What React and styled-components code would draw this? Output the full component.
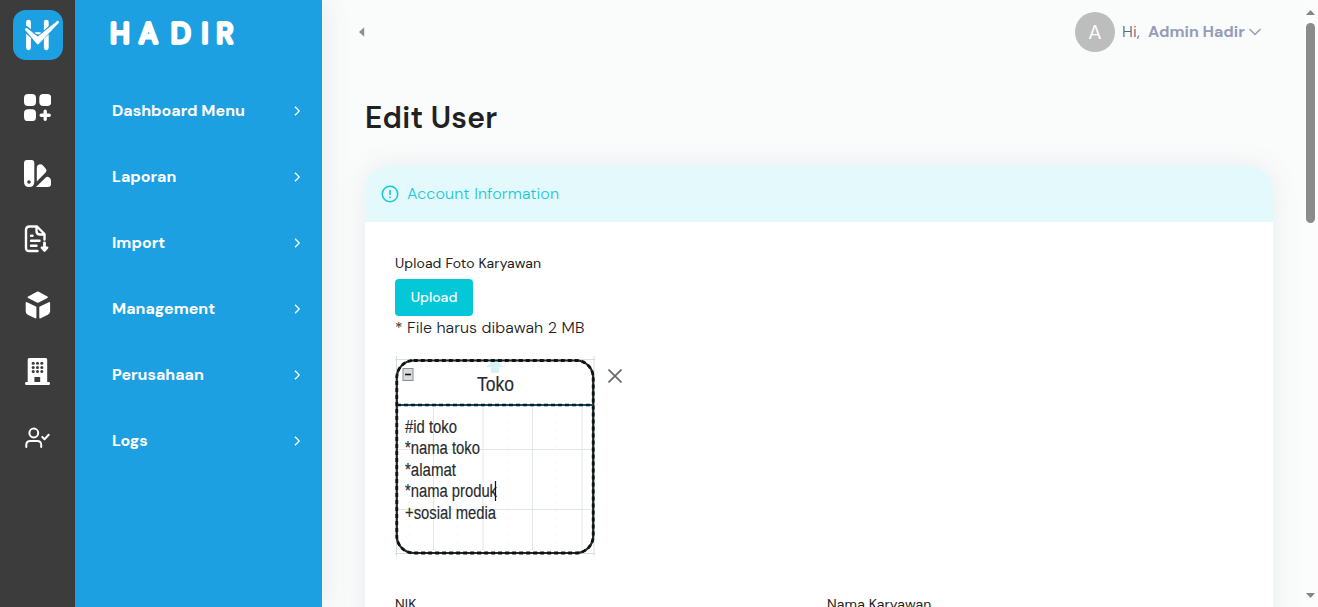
import React from "react";
import styled, { createGlobalStyle } from "styled-components";

const GlobalStyle = createGlobalStyle`
  * { box-sizing: border-box; }
  html, body { margin: 0; height: 100%; overflow: hidden; }
  body { font-family: "DM Sans", Inter, "Liberation Sans", sans-serif; color: #212121; }
  svg { display: block; flex: none; }
`;

const Page = styled.div`
  display: flex;
  width: 100%;
  height: 607px;
  overflow: hidden;
  background: #fafcfc;
`;
const Rail = styled.aside`
  width: 75px;
  flex: none;
  background: #3c3c3c;
  padding-top: 10px;
  display: flex;
  flex-direction: column;
  align-items: center;
  z-index: 2;
`;
const RailItems = styled.div`
  padding-top: 14px;
  display: flex;
  flex-direction: column;
`;
const RailItem = styled.div`
  height: 66px;
  display: flex;
  align-items: center;
  justify-content: center;
`;
const Sidebar = styled.nav`
  width: 247px;
  flex: none;
  background: #1da0e2;
  box-shadow: 0 0 28px rgba(82, 85, 92, 0.12);
  z-index: 1;
`;
const Brand = styled.div`
  height: 78px;
  padding: 15px 0 0 30px;
`;
const NavRow = styled.div`
  height: 66px;
  padding: 0 20px 0 37px;
  display: flex;
  align-items: center;
  justify-content: space-between;
  color: #fff;
  font-size: 16px;
  font-weight: 700;
  line-height: 24px;
`;
const Main = styled.main`
  flex: 1;
  min-width: 0;
  padding: 0 30px 0 43px;
`;
const TopBar = styled.header`
  height: 64px;
  display: flex;
  align-items: center;
  justify-content: space-between;
  margin-left: -7px;
`;
const Account = styled.div`
  display: flex;
  align-items: center;
  margin-right: 12px;
`;
const Avatar = styled.div`
  width: 40px;
  height: 40px;
  border-radius: 50%;
  background: #bdbdbd;
  color: #fff;
  font-size: 20px;
  display: flex;
  align-items: center;
  justify-content: center;
  margin-right: 7px;
`;
const Greeting = styled.span`
  font-size: 16px;
  line-height: 22px;
  font-weight: 300;
  color: #596680;
  width: 26px;
  letter-spacing: 0.2px;
`;
const AccountName = styled.span`
  font-size: 16px;
  line-height: 22px;
  font-weight: 700;
  color: #959cb6;
  width: 101px;
  white-space: nowrap;
`;
const Title = styled.h1`
  margin: 34px 0 28px;
  font-size: 30px;
  line-height: 40px;
  font-weight: 600;
  letter-spacing: 0.25px;
`;
const Card = styled.section`
  height: 900px;
  background: #fff;
  border-radius: 24px;
  box-shadow: 0 0 28px rgba(82, 85, 102, 0.1);
`;
const CardHeader = styled.div`
  height: 56px;
  padding: 0 16px;
  border-radius: 24px 24px 0 0;
  background: #e3f9fb;
  color: #19c8d8;
  display: flex;
  align-items: center;
  gap: 8px;
  font-size: 16px;
  font-weight: 300;
  letter-spacing: 0.14px;
`;
const CardTitle = styled.span`
  line-height: 22px;
`;
const CardBody = styled.div`
  padding: 31px 30px;
`;
const Label = styled.div`
  font-size: 14px;
  line-height: 20px;
  letter-spacing: 0.13px;
`;
const UploadButton = styled.button`
  display: block;
  width: 78px;
  height: 37px;
  margin-top: 6px;
  padding: 0;
  border: 0;
  border-radius: 4px;
  background: #04c8d8;
  color: #fff;
  font-family: inherit;
  font-size: 14px;
  font-weight: 500;
  line-height: 37px;
`;
const Hint = styled.div`
  font-size: 16px;
  line-height: 24px;
  font-weight: 300;
  letter-spacing: 0.08px;
`;
const Preview = styled.div`
  display: flex;
  gap: 13px;
  margin-top: 16px;
  height: 200px;
`;
const RemoveButton = styled.span`
  padding-top: 13px;
  height: 30px;
`;
const Fields = styled.div`
  margin-top: 38px;
  display: grid;
  grid-template-columns: 432px 1fr;
`;
const ScrollTrack = styled.div`
  width: 15px;
  flex: none;
  background: #fcfcfc;
  display: flex;
  flex-direction: column;
  align-items: center;
  padding: 10px 0 9px;
`;
const ScrollThumb = styled.div`
  width: 9px;
  height: 200px;
  border-radius: 5px;
  background: #8b8b8b;
  margin: 8px 0 auto;
`;

const AppLogo = () => (
  <svg width="50" height="50" viewBox="0 0 50 50">
    <rect width="50" height="50" rx="13" fill="#1da0e2" />
    <g fill="none" strokeLinecap="round" strokeLinejoin="round">
      <path d="M15.5 12.2V37.8M33.3 12.2V37.8" stroke="#fff" strokeWidth="4.8" />
      <path d="M22.500 23.300H27" stroke="#fff" strokeWidth="2" />
      <path d="M13.300 19.500L25 30L44.700 12" stroke="#1da0e2" strokeWidth="6.400" />
      <path d="M13.400 19.300L24.800 33L44.700 12.200L24.800 28.300Z" fill="#fff" stroke="#fff" strokeWidth="2.600" />
    </g>
  </svg>
);

const Wordmark = () => (
  <svg width="140" height="36" viewBox="0 0 140 36">
    <text
      x="5.2 34 66 96.700 111.500"
      y="28"
      fontFamily="DM Sans, Inter, sans-serif"
      fontSize="28.5"
      fontWeight="300"
      fill="#fff"
      stroke="#fff"
      strokeWidth="3.8"
      strokeLinejoin="round"
    >
      HADIR
    </text>
  </svg>
);

const ModulesIcon = () => (
  <svg width="27" height="27" viewBox="0 0 27 27" fill="#fff">
    <rect width="12" height="12" rx="4" />
    <rect x="15.3" width="12" height="12" rx="4" />
    <rect y="15.2" width="12" height="12" rx="4" />
    <path d="M21.2 17.2V25.2M17.2 21.2H25.2" stroke="#fff" strokeWidth="3.4" strokeLinecap="round" />
  </svg>
);

const SwatchIcon = () => (
  <svg width="27" height="27" viewBox="0 0 27 27" fill="#fff">
    <path fillRule="evenodd" d="M3 0H7.5Q10.3 0 10.3 3V22Q10.3 27 5.2 27Q0 27 0 22V3Q0 0 3 0ZM5 20.200A1.800 1.800 0 1 0 5 23.800A1.800 1.800 0 1 0 5 20.200Z" />
    <path d="M12.8 7Q13 5 15 4.4Q17.5 3.7 19 5.5L22 9Q23.2 10.6 21.8 12.3L12.8 21.5Z" />
    <path d="M12 27L22 17.2Q23 16.3 24.6 17Q27 18.2 27 20.5V24Q27 27 24 27Z" />
  </svg>
);

const ImportIcon = () => (
  <svg width="27" height="28" viewBox="0 0 27 28" fill="none" stroke="#fff" strokeWidth="2.4" strokeLinecap="round" strokeLinejoin="round">
    <path d="M13.5 26H5Q2 26 2 22.8V5Q2 1.5 5.5 1.5H13L20.5 9V14.5M12.5 2V6Q12.5 9.5 16 9.5H20M7 10.8H8.5M7 15.8H15.5M7 20.8H12.5" />
    <path d="M20.5 18V23" strokeWidth="2.8" />
    <path d="M17.8 22.700L20.5 25.700L23.2 22.700Z" fill="#fff" />
  </svg>
);

const BoxIcon = () => (
  <svg width="26" height="28" viewBox="0 0 26 28" fill="#fff" stroke="#fff" strokeWidth="1.8" strokeLinejoin="round">
    <path d="M12.8 1.400L22 6.2L12.8 10.900L3.5 6.2Z" />
    <path d="M1.6 12L10.5 16.200V26.500L3.2 22.900Q1.6 22 1.6 20.300Z" />
    <path d="M24.2 12L15.200 16.200V26.500L22.5 22.900Q24.2 22 24.2 20.300Z" />
  </svg>
);

const BuildingIcon = () => (
  <svg width="25" height="27" viewBox="0 0 25 27" fill="#fff">
    <path d="M4.2 0H20.8Q22.2 0 22.2 1.5V24H24Q25 24.3 25 25.5T24 27H1Q0 26.7 0 25.5T1 24H2.7V1.5Q2.7 0 4.2 0Z" />
    <g fill="#3c3c3c">
      {[5.3, 9.4, 13.5].map((y) => [8.2, 12.5, 16.8].map((x) => <circle key={`${x}-${y}`} cx={x} cy={y} r="1.5" />))}
      <path d="M9.4 19H15.2V24H9.4Z" />
    </g>
  </svg>
);

const UserCheckIcon = () => (
  <svg width="25" height="21" viewBox="0 0 25 21" fill="none" stroke="#fff" strokeWidth="2" strokeLinecap="round" strokeLinejoin="round">
    <circle cx="8.8" cy="6" r="4.4" />
    <path d="M1.3 20V17.800Q1.3 14 5.3 14H12.2Q16.2 14 16.2 17.800V20M17.3 10L19.5 12.300L23.7 7.800" />
  </svg>
);

const Chevron = () => (
  <svg width="9" height="12" viewBox="0 0 9 12" fill="none" stroke="#fff" strokeWidth="1.3">
    <path d="M2 1.8L6.2 6L2 10.2" />
  </svg>
);

const PhotoPreview = () => (
  <svg width="200" height="200" viewBox="0 0 200 200">
    <g stroke="#eef4f4" fill="none">
      <path d="M0 3.5H200M0 197.5H200M1.5 0V200M199 0V200" stroke="#d5dddd" />
      <path d="M14 50V194M63 50V194M112 50V194M161 50V194" stroke="#f0f6f5" strokeDasharray="2 6" />
      <path d="M38.5 50V194M88 50V194M137.500 50V194M187 50V194M2 93.500H197M2 153.500H197" stroke="#e0e7e6" />
    </g>
    <path d="M96 17V11H91L100 3L109 11H104V17Z" fill="#d8f3f8" />
    <rect x="1.800" y="4.500" width="196.400" height="192.500" rx="17" fill="none" stroke="#20282a" strokeWidth="2.200" />
    <rect x="1.800" y="4.500" width="196.400" height="192.500" rx="17" fill="none" stroke="#111" strokeWidth="2.800" strokeDasharray="4 3" />
    <path d="M2 49H198" stroke="#174d63" strokeWidth="2.200" />
    <path d="M2 49H198" stroke="#061c26" strokeWidth="2.400" strokeDasharray="4 3" />
    <rect x="8" y="12.500" width="10" height="12" fill="#d9dade" stroke="#8c8e93" />
    <path d="M10 18.500H16" stroke="#111" strokeWidth="1.600" />
    <g fontFamily="Liberation Sans, sans-serif" fontSize="18" fill="#272a2e" stroke="#272a2e" strokeWidth="0.15">
      <text x="82" y="35" fontSize="20" textLength="37" lengthAdjust="spacingAndGlyphs">Toko</text>
      <text x="10" y="77" textLength="52" lengthAdjust="spacingAndGlyphs">#id toko</text>
      <text x="10" y="98" textLength="75" lengthAdjust="spacingAndGlyphs">*nama toko</text>
      <text x="10" y="120" textLength="51" lengthAdjust="spacingAndGlyphs">*alamat</text>
      <text x="10" y="141" textLength="92" lengthAdjust="spacingAndGlyphs">*nama produk</text>
      <text x="10" y="163" textLength="91" lengthAdjust="spacingAndGlyphs">+sosial media</text>
    </g>
    <path d="M100.500 125V145" stroke="#111" strokeWidth="1.200" />
  </svg>
);

const railIcons = [ModulesIcon, SwatchIcon, ImportIcon, BoxIcon, BuildingIcon, UserCheckIcon];
const menu = ["Dashboard Menu", "Laporan", "Import", "Management", "Perusahaan", "Logs"];

export default function App() {
  return (
    <>
      <GlobalStyle />
      <Page>
        <Rail>
          <AppLogo />
          <RailItems>
            {railIcons.map((Icon, i) => (
              <RailItem key={i}><Icon /></RailItem>
            ))}
          </RailItems>
        </Rail>
        <Sidebar>
          <Brand><Wordmark /></Brand>
          {menu.map((label) => (
            <NavRow key={label}>
              {label}
              <Chevron />
            </NavRow>
          ))}
        </Sidebar>
        <Main>
          <TopBar>
            <svg width="7" height="12" viewBox="0 0 7 12"><path d="M6.200 1.200V10.800L1 6Z" fill="#8c8f9b" /></svg>
            <Account>
              <Avatar>A</Avatar>
              <Greeting>Hi,</Greeting>
              <AccountName>Admin Hadir</AccountName>
              <svg width="12" height="8" viewBox="0 0 12 8" fill="none" stroke="#959cb6" strokeWidth="1.400"><path d="M0.500 1L6 6.500L11.500 1" /></svg>
            </Account>
          </TopBar>
          <Title>Edit User</Title>
          <Card>
            <CardHeader>
              <svg width="18" height="18" viewBox="0 0 18 18" fill="none" stroke="#19c8d8" strokeWidth="1.600">
                <circle cx="9" cy="9" r="7.700" />
                <path d="M9 5V10M9 11.500V13.200" />
              </svg>
              <CardTitle>Account Information</CardTitle>
            </CardHeader>
            <CardBody>
              <Label>Upload Foto Karyawan</Label>
              <UploadButton>Upload</UploadButton>
              <Hint>* File harus dibawah 2 MB</Hint>
              <Preview>
                <PhotoPreview />
                <RemoveButton>
                  <svg width="14" height="14" viewBox="0 0 14 14" stroke="#666" strokeWidth="1.600"><path d="M0.500 0.500L13.500 13.500M13.500 0.500L0.500 13.500" /></svg>
                </RemoveButton>
              </Preview>
              <Fields>
                <Label>NIK</Label>
                <Label>Nama Karyawan</Label>
              </Fields>
            </CardBody>
          </Card>
        </Main>
        <ScrollTrack>
          <svg width="9" height="5" viewBox="0 0 9 5"><path d="M0 5L4.500 0L9 5Z" fill="#858585" /></svg>
          <ScrollThumb />
          <svg width="9" height="5" viewBox="0 0 9 5"><path d="M0 0L4.500 5L9 0Z" fill="#858585" /></svg>
        </ScrollTrack>
      </Page>
    </>
  );
}
